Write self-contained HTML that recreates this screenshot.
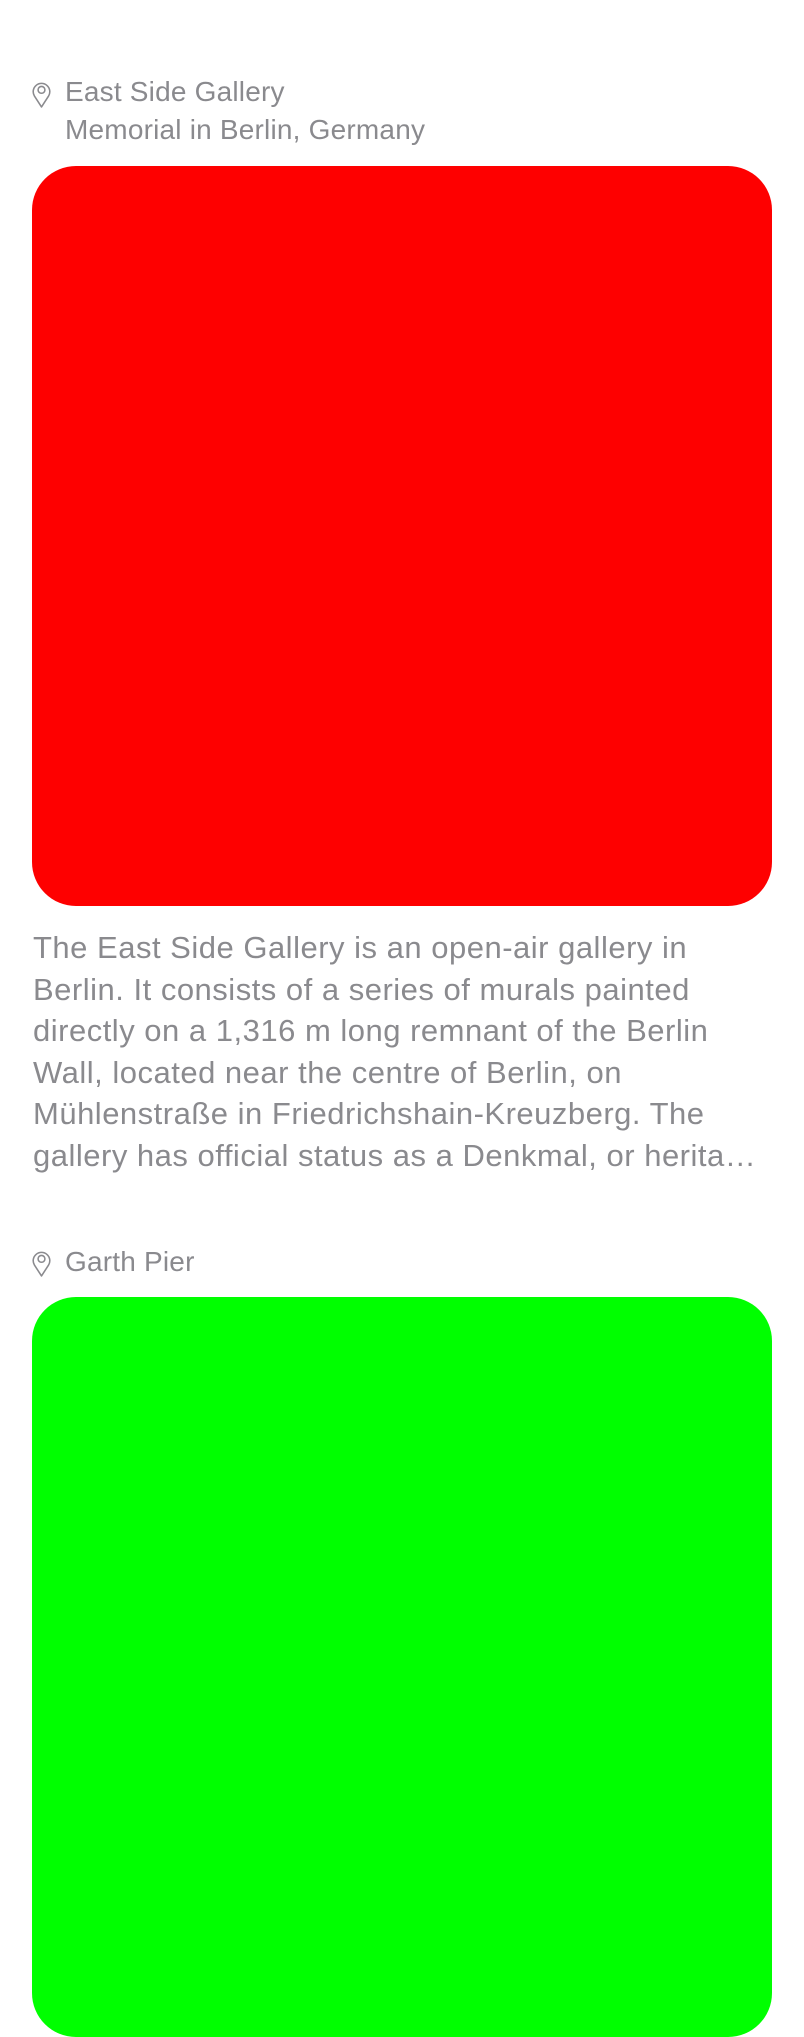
<!DOCTYPE html>
<html><head><style>
body{margin:0;width:804px;height:1748px;background:#fff;overflow:hidden;position:relative;font-family:"Liberation Sans",sans-serif;color:#8a8a8e}
.t{position:absolute;left:65px;font-size:28px;letter-spacing:0.2px;white-space:nowrap;line-height:1}
.box{position:absolute;left:32px;width:740px;border-radius:44px}
.d{position:absolute;left:33px;font-size:31px;letter-spacing:0.5px;white-space:nowrap;line-height:1}
svg{position:absolute}
</style></head><body>
<svg style="left:31px;top:80px" width="21" height="28" viewBox="0 0 20 27"><path d="M10 26 L3.2 15.5 A8 8 0 1 1 16.8 15.5 Z" fill="none" stroke="#8a8a8e" stroke-width="1.5" stroke-linejoin="round"/><circle cx="10" cy="9.5" r="3.3" fill="none" stroke="#8a8a8e" stroke-width="1.5"/></svg>
<div class="t" style="top:78px">East Side Gallery</div>
<div class="t" style="top:116px">Memorial in Berlin, Germany</div>
<div class="box" style="top:166px;height:740px;background:#fe0000"></div>
<div class="d" style="top:932px">The East Side Gallery is an open-air gallery in</div>
<div class="d" style="top:974px">Berlin. It consists of a series of murals painted</div>
<div class="d" style="top:1015px">directly on a 1,316 m long remnant of the Berlin</div>
<div class="d" style="top:1057px">Wall, located near the centre of Berlin, on</div>
<div class="d" style="top:1098px">Mühlenstraße in Friedrichshain-Kreuzberg. The</div>
<div class="d" style="top:1140px">gallery has official status as a Denkmal, or herita…</div>
<svg style="left:31px;top:1249px" width="21" height="28" viewBox="0 0 20 27"><path d="M10 26 L3.2 15.5 A8 8 0 1 1 16.8 15.5 Z" fill="none" stroke="#8a8a8e" stroke-width="1.5" stroke-linejoin="round"/><circle cx="10" cy="9.5" r="3.3" fill="none" stroke="#8a8a8e" stroke-width="1.5"/></svg>
<div class="t" style="top:1248px">Garth Pier</div>
<div class="box" style="top:1297px;height:740px;background:#00ff00"></div>
</body></html>
